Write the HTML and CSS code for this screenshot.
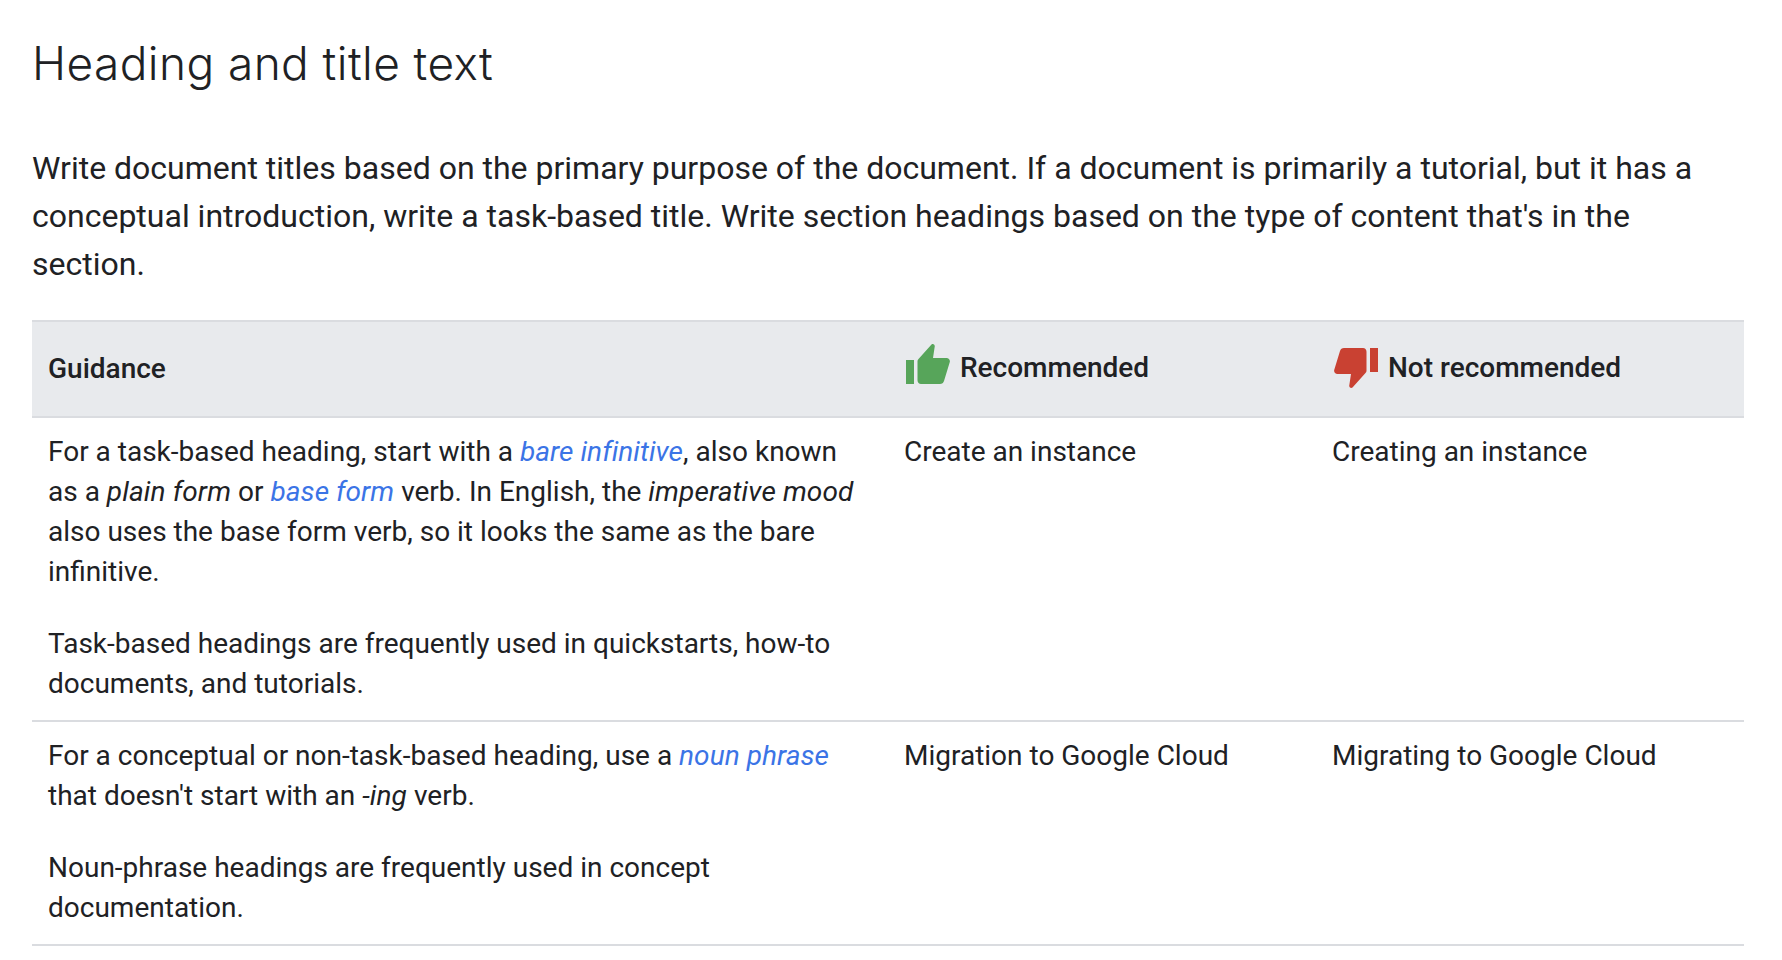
FILE: index.html
```html
<!DOCTYPE html>
<html lang="en">
<head>
<meta charset="utf-8">
<title>Heading and title text</title>
<link rel="stylesheet" href="styles.css">
</head>
<body>
<main class="page">
<h2 class="title">Heading and title text</h2>
<p class="intro">Write document titles based on the primary purpose of the document. If a document is primarily a tutorial, but it has a conceptual introduction, write a task-based title. Write section headings based on the type of content that's in the section.</p>
<table class="guide">
<colgroup><col class="c1"><col class="c2"><col class="c3"></colgroup>
<thead>
<tr>
<th class="plain">Guidance</th>
<th><span class="head"><svg class="icon icon-up" viewBox="0 0 44 40" width="44" height="40"><path fill="#57a55a" d="M0 16h8v24H0z"/><path fill="#57a55a" d="M12.500 15L25.500.5c1.200-1 3-.3 3.300 1.500L27 14h13.500c2.300 0 3.800 2 3.300 4L38 37c-.6 1.800-2 3-4 3H15c-2 0-3.500-1.700-3.500-3.800V17c0-.8.400-1.400 1-2z"/></svg>Recommended</span></th>
<th><span class="head"><svg class="icon icon-down" viewBox="0 0 44 40" width="44" height="40"><path fill="#c94132" d="M36 0h8v24h-8z"/><path fill="#c94132" d="M31.500 25L18.500 39.500c-1.200 1-3 .3-3.300-1.500L17 26H3.500c-2.300 0-3.800-2-3.300-4L6 3c.6-1.800 2-3 4-3h19c2 0 3.500 1.700 3.500 3.800V23c0 .8-.4 1.400-1 2z"/></svg>Not recommended</span></th>
</tr>
</thead>
<tbody>
<tr>
<td>
<p>For a task-based heading, start with a <a href="#">bare infinitive</a>, also known as a <em>plain form</em> or <a href="#">base form</a> verb. In English, the <em>imperative mood</em> also uses the base form verb, so it looks the same as the bare infinitive.</p>
<p>Task-based headings are frequently used in quickstarts, how-to documents, and tutorials.</p>
</td>
<td>Create an instance</td>
<td>Creating an instance</td>
</tr>
<tr>
<td>
<p>For a conceptual or non-task-based heading, use a <a href="#">noun phrase</a> that doesn't start with an <em>-ing</em> verb.</p>
<p>Noun-phrase headings are frequently used in concept documentation.</p>
</td>
<td>Migration to Google Cloud</td>
<td>Migrating to Google Cloud</td>
</tr>
</tbody>
</table>
</main>
</body>
</html>
```
FILE: styles.css
```css
html, body { margin: 0; padding: 0; background: #fff; }
body { font-family: Roboto, "Liberation Sans", sans-serif; color: #202124; overflow: hidden; }
.page { padding: 31px 38px 0 32px; }
.title { margin: 0; font-family: Inter, Roboto, sans-serif; font-weight: 350; font-size: 46px; line-height: 64px; letter-spacing: 0.42px; }
.intro { margin: 49px 0 0; font-size: 32px; line-height: 48px; }
.guide { margin-top: 32px; width: 100%; border-collapse: collapse; table-layout: fixed; font-size: 28px; line-height: 40px; }
.c1 { width: 856px; }
.c2 { width: 428px; }
.guide th { background: #e8eaed; text-align: left; font-weight: 500; height: 92px; padding: 0 16px 2px; border-top: 2px solid #dadce0; border-bottom: 2px solid #dadce0; }
.guide .plain { padding-top: 1px; padding-bottom: 1px; }
.guide td { vertical-align: top; padding: 14px 16px 16px; border-bottom: 2px solid #dadce0; }
.guide td:first-child { padding-right: 24px; }
.guide td p { margin: 0 0 32px; }
.guide td p:last-child { margin-bottom: 0; }
.guide em { letter-spacing: 0.12px; }
.guide a { color: #3b74e6; font-style: italic; letter-spacing: 0.05px; text-decoration: none; }
.head { display: flex; align-items: center; gap: 11px; }
.icon { flex: none; }
.icon-up { margin: 0 -1px 8px 2px; }
.icon-down { margin: 0 -1px 0 2px; }
```
